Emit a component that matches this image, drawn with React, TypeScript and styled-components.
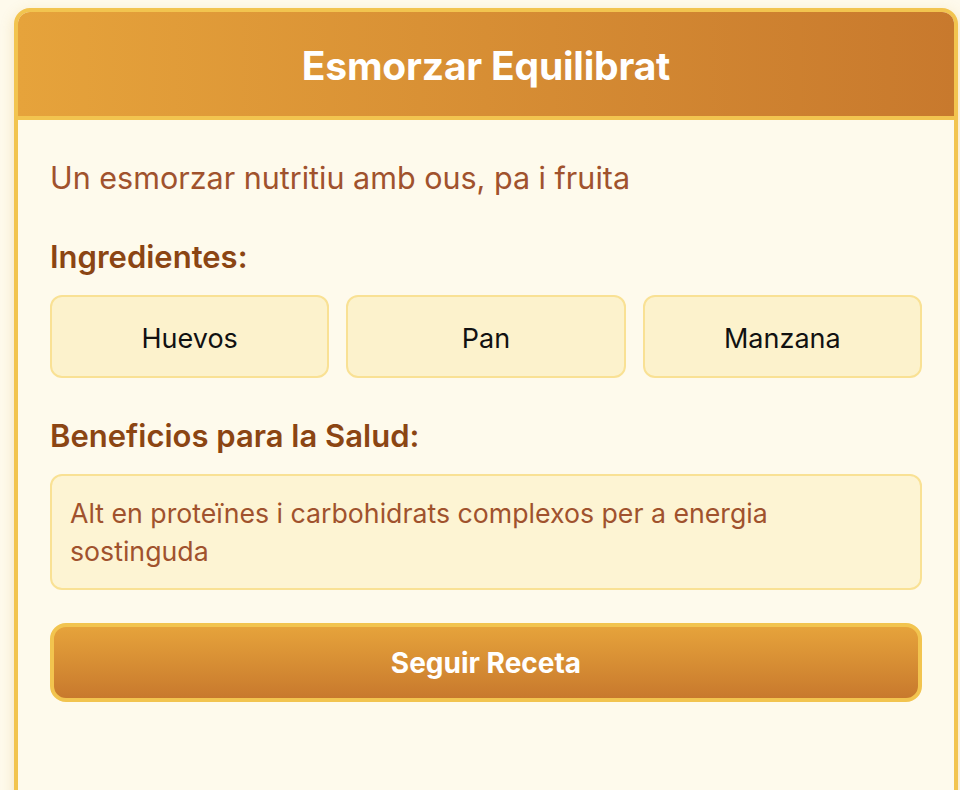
import React from 'react';
import styled, { createGlobalStyle } from 'styled-components';

const CREAM = '#fefaec';
const GOLD = '#f2c44f';
const SIENNA = '#a0522d';
const BROWN = '#8b4513';

const GlobalStyle = createGlobalStyle`
  html, body {
    margin: 0;
    padding: 0;
    background: ${CREAM};
    font-family: Inter, "Noto Sans", "Liberation Sans", sans-serif;
  }
`;

const Page = styled.div`
  padding: 8px 2px 0 14px;
  height: 790px;
  box-sizing: border-box;
  overflow: hidden;
`;

const Card = styled.div`
  width: 944px;
  min-height: 800px;
  box-sizing: border-box;
  border: 4px solid ${GOLD};
  border-radius: 16px;
  background: ${CREAM};
  overflow: hidden;
  box-shadow: 0 4px 14px rgba(210, 160, 60, 0.25);
`;

const Header = styled.div`
  height: 108px;
  padding-top: 4px;
  box-sizing: border-box;
  display: flex;
  align-items: center;
  justify-content: center;
  background: linear-gradient(90deg, #e6a33b 0%, #c8792d 100%);
  border-bottom: 4px solid ${GOLD};
`;

const Title = styled.h1`
  margin: 0;
  color: #fff;
  font-size: 39px;
  line-height: 44px;
  font-weight: 700;
  letter-spacing: -0.2px;
`;

const Body = styled.div`
  padding: 38px 32px 32px;
  display: flex;
  flex-direction: column;
`;

const Description = styled.p`
  margin: 0;
  font-size: 30.5px;
  line-height: 39px;
  color: ${SIENNA};
`;

const SectionTitle = styled.h2<{ top: number }>`
  margin: ${(p) => p.top}px 0 0;
  font-size: 31px;
  line-height: 39px;
  font-weight: 600;
  color: ${BROWN};
`;

const ChipRow = styled.div`
  margin-top: 19px;
  display: grid;
  grid-template-columns: repeat(3, 1fr);
  gap: 17px;
`;

const Chip = styled.div`
  height: 83px;
  padding-top: 4px;
  box-sizing: border-box;
  display: flex;
  align-items: center;
  justify-content: center;
  background: #fcf2cc;
  border: 2px solid #f9e194;
  border-radius: 12px;
  font-size: 27px;
  color: #111;
`;

const BenefitBox = styled.div`
  margin-top: 19px;
  padding: 18px 18px;
  background: #fdf4d3;
  border: 2px solid #f9e194;
  border-radius: 12px;
  font-size: 26.7px;
  line-height: 38px;
  color: ${SIENNA};
`;

const ActionButton = styled.button`
  margin-top: 33px;
  height: 79px;
  border: 4px solid ${GOLD};
  border-radius: 16px;
  background: linear-gradient(180deg, #e6a33b 0%, #c8792d 100%);
  color: #fff;
  font-family: inherit;
  font-size: 28px;
  font-weight: 700;
  cursor: pointer;
`;

const ingredients = ['Huevos', 'Pan', 'Manzana'];

export default function App() {
  return (
    <>
      <GlobalStyle />
      <Page>
        <Card>
          <Header>
            <Title>Esmorzar Equilibrat</Title>
          </Header>
          <Body>
            <Description>Un esmorzar nutritiu amb ous, pa i fruita</Description>
            <SectionTitle top={40}>Ingredientes:</SectionTitle>
            <ChipRow>
              {ingredients.map((i) => (
                <Chip key={i}>{i}</Chip>
              ))}
            </ChipRow>
            <SectionTitle top={38}>Beneficios para la Salud:</SectionTitle>
            <BenefitBox>
              Alt en proteïnes i carbohidrats complexos per a energia sostinguda
            </BenefitBox>
            <ActionButton>Seguir Receta</ActionButton>
          </Body>
        </Card>
      </Page>
    </>
  );
}
